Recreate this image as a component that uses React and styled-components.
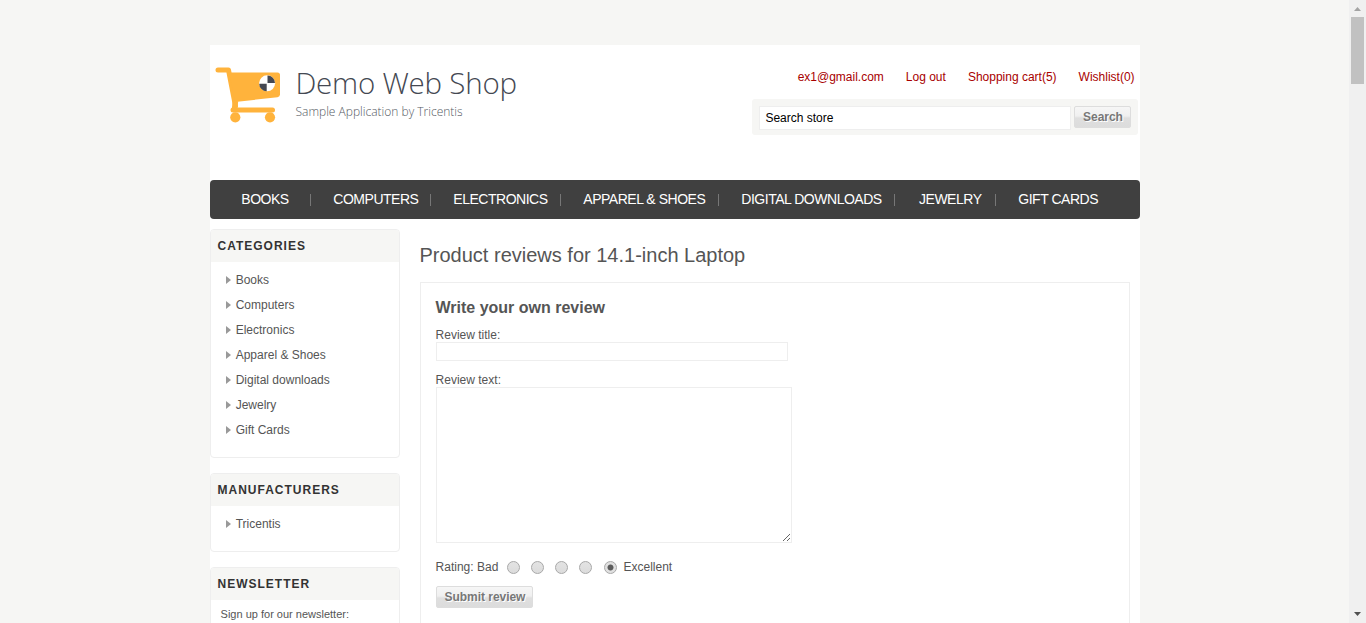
import React from "react";
import styled, { createGlobalStyle } from "styled-components";

const GlobalStyle = createGlobalStyle`
  *, *::before, *::after { box-sizing: border-box; }
  html, body { margin: 0; padding: 0; overflow: hidden; background: #f6f6f4; }
  body { font-family: "Liberation Sans", Arial, sans-serif; font-size: 12px; color: #555; }
  ul { list-style: none; margin: 0; padding: 0; }
  h1, h2, h3 { margin: 0; }
  input, textarea, button { font-family: inherit; }
`;

const Viewport = styled.div`
  display: flex;
  width: 1366px;
  height: 623px;
  overflow: hidden;
`;

const Page = styled.div`
  flex: 1;
  padding: 45px 0 0 210px;
  overflow: hidden;
`;

const Shell = styled.div`
  width: 930px;
  height: 900px;
  background: #fff;
`;

const Header = styled.header`
  display: flex;
  justify-content: space-between;
  height: 135px;
`;

const Logo = styled.a`
  display: flex;
  padding: 21px 0 0 5px;
`;

const LogoText = styled.div`
  display: flex;
  flex-direction: column;
  padding-left: 13.5px;
  font-family: "Open Sans", sans-serif;
  font-weight: 300;
  white-space: nowrap;
`;

const LogoName = styled.span`
  font-size: 29.5px;
  line-height: 34px;
  letter-spacing: -0.22px;
  color: #444852;
`;

const LogoTagline = styled.span`
  font-size: 12px;
  line-height: 16px;
  margin-top: 4px;
  color: #555963;
`;

const HeaderTools = styled.div`
  display: flex;
  flex-direction: column;
  align-items: flex-end;
  padding: 24px 2px 0 0;
`;

const HeaderLinks = styled.ul`
  display: flex;
  gap: 22px;
  padding-right: 3.4px;
  line-height: 16px;
  color: #a80000;
`;

const SearchBar = styled.div`
  display: flex;
  gap: 3px;
  width: 386px;
  height: 36px;
  margin-top: 14px;
  padding: 7px;
  border-radius: 3px;
  background: #f6f6f4;
`;

const SearchInput = styled.input`
  width: 312px;
  height: 24px;
  padding: 0 5.4px;
  border: 1px solid #eee;
  outline: none;
  font-size: 12px;
  color: #000;
`;

const Button = styled.button`
  width: ${(p) => p.$width}px;
  height: 22px;
  padding: 0 0 1px 1px;
  border: 1px solid #ddd;
  border-radius: 2px;
  background: linear-gradient(#f6f6f6 0%, #f0f0f0 45%, #dfdfdf 55%, #dcdcdc 100%);
  font-size: 12px;
  font-weight: bold;
  letter-spacing: -0.04px;
  color: #777;
  text-shadow: 1px 1px 0 #fff;
  white-space: nowrap;
`;

const Nav = styled.ul`
  display: flex;
  align-items: center;
  height: 39px;
  padding-left: 9px;
  border-radius: 4px;
  background: #404040;
`;

const NavItem = styled.li`
  display: flex;
  align-items: center;
  width: ${(p) => p.$width}px;
  height: 39px;
  padding-left: ${(p) => p.$indent || 22.3}px;
  padding-bottom: 2px;
  font-size: 14px;
  letter-spacing: -0.48px;
  color: #fff;
  white-space: nowrap;

  &:not(:last-child)::after {
    content: "";
    width: 1px;
    height: 12px;
    margin: 3px 0 0 auto;
    background: #777;
  }
`;

const Columns = styled.div`
  display: flex;
  gap: 20px;
  padding-top: 10px;
`;

const Sidebar = styled.aside`
  display: flex;
  flex-direction: column;
  gap: 15px;
  width: 190px;
`;

const Block = styled.section`
  border: 1px solid #eee;
  border-radius: 4px;
  overflow: hidden;
`;

const BlockTitle = styled.h3`
  height: 32px;
  padding-left: 6.5px;
  background: #f6f6f4;
  font-size: 12px;
  line-height: 32px;
  letter-spacing: 1px;
  color: #333;
`;

const BlockList = styled.ul`
  padding: 5px 0 15px 15px;
`;

const BlockItem = styled.li`
  display: flex;
  align-items: center;
  gap: 4.7px;
  height: 25px;

  &::before {
    content: "";
    border: solid transparent;
    border-width: 4.5px 0 4.5px 5px;
    border-left-color: #999;
  }
`;

const NewsletterText = styled.p`
  height: 80px;
  margin: 0;
  padding: 6px 0 0 9.6px;
  font-size: 11px;
  line-height: 16px;
`;

const Main = styled.main`
  width: 710px;
`;

const PageTitle = styled.h1`
  height: 53px;
  padding-top: 13px;
  margin-left: -0.5px;
  font-size: 20px;
  font-weight: normal;
  line-height: 26px;
  white-space: nowrap;
`;

const ReviewForm = styled.div`
  display: flex;
  flex-direction: column;
  align-items: flex-start;
  height: 420px;
  padding: 15px;
  border: 1px solid #eee;
`;

const FormTitle = styled.h2`
  margin-left: -0.5px;
  font-size: 16px;
  line-height: 20px;
`;

const Label = styled.label`
  height: 14px;
  margin: ${(p) => p.$top}px 0 0 -0.4px;
  line-height: 15px;
`;

const TitleInput = styled.input`
  width: 352px;
  height: 19px;
  border: 1px solid #eee;
`;

const ReviewArea = styled.textarea`
  display: block;
  width: 356px;
  height: 156px;
  border: 1px solid #eee;
`;

const Rating = styled.div`
  display: flex;
  align-items: center;
  height: 15px;
  margin: 16px 0 12px -0.4px;
  white-space: nowrap;
`;

const RatingOptions = styled.div`
  display: flex;
  gap: 11.25px;
  margin-top: 1px;
  padding: 0 7px 0 8.2px;
`;

const Radio = styled.input`
  appearance: none;
  width: 13px;
  height: 13px;
  margin: 0;
  border: 1px solid #a8a8a8;
  border-radius: 50%;
  background: linear-gradient(#e3e3e3, #dcdcdc);

  &:checked {
    background: radial-gradient(circle, #5c5c5c 0 2.6px, #e0e0e0 3.4px);
  }
`;

const Scrollbar = styled.div`
  display: flex;
  flex-direction: column;
  align-items: center;
  justify-content: space-between;
  width: 17px;
  height: 623px;
  background: #f0f0f0;
`;

const ScrollTrack = styled.div`
  flex: 1;
`;

const ScrollThumb = styled.div`
  width: 13px;
  height: 67px;
  background: #c1c1c1;
`;

const ScrollArrow = styled.svg`
  display: block;
  width: 17px;
  height: 17px;
`;

const navItems = [
  { label: "BOOKS", width: 92 },
  { label: "COMPUTERS", width: 120 },
  { label: "ELECTRONICS", width: 130 },
  { label: "APPAREL & SHOES", width: 158 },
  { label: "DIGITAL DOWNLOADS", width: 176 },
  { label: "JEWELRY", width: 101, indent: 24 },
  { label: "GIFT CARDS", width: 140 },
];

const categories = ["Books", "Computers", "Electronics", "Apparel & Shoes", "Digital downloads", "Jewelry", "Gift Cards"];

function CartIcon() {
  return (
    <svg width="67" height="58" viewBox="0 0 67 58">
      <path d="M3 4H13.5L20.5 40" fill="none" stroke="#ffb33c" strokeWidth="5" strokeLinecap="round" strokeLinejoin="round" />
      <path d="M14 6.5H62.5Q65 6.5 65 9V28.5Q65 30.8 62.5 31.2L20 36Z" fill="#ffb33c" />
      <path d="M20.5 35L19.5 43" stroke="#ffb33c" strokeWidth="5.5" />
      <rect x="15.5" y="41.5" width="44.5" height="5" rx="2.5" fill="#ffb33c" />
      <circle cx="20.3" cy="51.3" r="5.1" fill="#ffb33c" />
      <circle cx="55" cy="51.3" r="5.1" fill="#ffb33c" />
      <circle cx="52.1" cy="17.3" r="8" fill="#fff" />
      <path d="M52.5 16.9V9.4A7.6 7.6 0 0 1 60 16.9ZM51.7 17.7V25.2A7.6 7.6 0 0 1 44.2 17.7Z" fill="#444852" />
    </svg>
  );
}

export default function App() {
  return (
    <>
      <GlobalStyle />
      <Viewport>
        <Page>
          <Shell>
            <Header>
              <Logo>
                <CartIcon />
                <LogoText>
                  <LogoName>Demo Web Shop</LogoName>
                  <LogoTagline>Sample Application by Tricentis</LogoTagline>
                </LogoText>
              </Logo>
              <HeaderTools>
                <HeaderLinks>
                  <li>ex1@gmail.com</li>
                  <li>Log out</li>
                  <li>Shopping cart(5)</li>
                  <li>Wishlist(0)</li>
                </HeaderLinks>
                <SearchBar>
                  <SearchInput defaultValue="Search store" />
                  <Button $width={57}>Search</Button>
                </SearchBar>
              </HeaderTools>
            </Header>
            <Nav>
              {navItems.map((item) => (
                <NavItem key={item.label} $width={item.width} $indent={item.indent}>
                  {item.label}
                </NavItem>
              ))}
            </Nav>
            <Columns>
              <Sidebar>
                <Block>
                  <BlockTitle>CATEGORIES</BlockTitle>
                  <BlockList>
                    {categories.map((name) => (
                      <BlockItem key={name}>{name}</BlockItem>
                    ))}
                  </BlockList>
                </Block>
                <Block>
                  <BlockTitle>MANUFACTURERS</BlockTitle>
                  <BlockList>
                    <BlockItem>Tricentis</BlockItem>
                  </BlockList>
                </Block>
                <Block>
                  <BlockTitle>NEWSLETTER</BlockTitle>
                  <NewsletterText>Sign up for our newsletter:</NewsletterText>
                </Block>
              </Sidebar>
              <Main>
                <PageTitle>Product reviews for 14.1-inch Laptop</PageTitle>
                <ReviewForm>
                  <FormTitle>Write your own review</FormTitle>
                  <Label $top={10}>Review title:</Label>
                  <TitleInput />
                  <Label $top={12}>Review text:</Label>
                  <ReviewArea />
                  <Rating>
                    <span>Rating: Bad</span>
                    <RatingOptions>
                      {[1, 2, 3, 4, 5].map((value) => (
                        <Radio key={value} type="radio" name="rating" value={value} defaultChecked={value === 5} />
                      ))}
                    </RatingOptions>
                    <span>Excellent</span>
                  </Rating>
                  <Button $width={97}>Submit review</Button>
                </ReviewForm>
              </Main>
            </Columns>
          </Shell>
        </Page>
        <Scrollbar>
          <ScrollArrow viewBox="0 0 17 17">
            <path d="M5 11L8.5 7L12 11Z" fill="#a3a3a3" />
          </ScrollArrow>
          <ScrollTrack>
            <ScrollThumb />
          </ScrollTrack>
          <ScrollArrow viewBox="0 0 17 17">
            <path d="M5 6L8.5 10L12 6Z" fill="#505050" />
          </ScrollArrow>
        </Scrollbar>
      </Viewport>
    </>
  );
}
